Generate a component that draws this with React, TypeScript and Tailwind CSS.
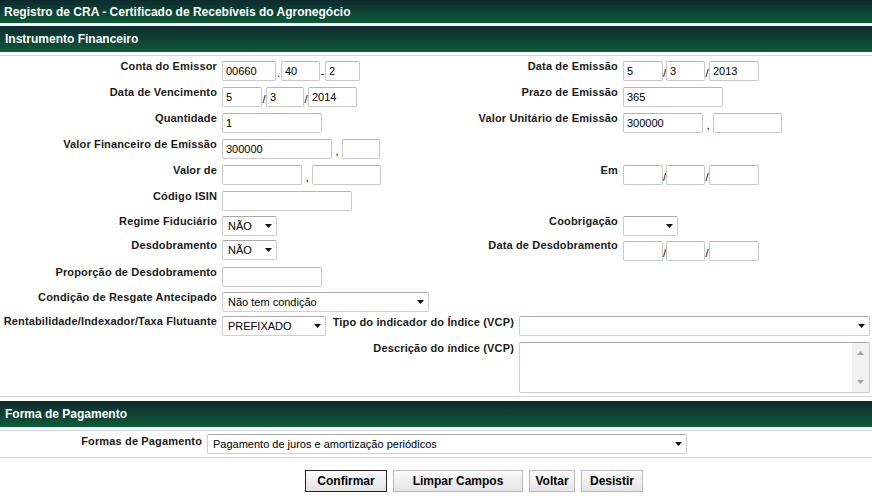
import React from "react";

// Registro de CRA – formulário de instrumento financeiro

function Field({ className = "", value = "" }: { className?: string; value?: string }) {
  return (
    <div
      className={`flex h-[20px] items-center rounded-[2px] border border-[#c9c9c9] border-t-[#b5b5b5] bg-white pl-[3px] text-[11px] text-black ${className}`}
    >
      {value}
    </div>
  );
}

function Sep({ ch, className = "w-[4px]" }: { ch: string; className?: string }) {
  return (
    <span className={`flex h-[20px] items-end justify-center pb-[2px] text-[11px] leading-[11px] text-black ${className}`}>
      {ch}
    </span>
  );
}

function Caret() {
  return (
    <svg width="7" height="4" viewBox="0 0 7 4" className="shrink-0">
      <path d="M0 0h7L3.5 4z" fill="#111" />
    </svg>
  );
}

function Select({ className = "", value = "" }: { className?: string; value?: string }) {
  return (
    <div
      className={`flex h-[20px] items-center justify-between rounded-[2px] border border-[#cfcfcf] border-t-[#a9a9a9] bg-white pl-[5px] pr-[4px] text-[11px] text-black ${className}`}
    >
      <span className="pt-[1px]">{value}</span>
      <Caret />
    </div>
  );
}

function Label({ children, className = "w-[217px]" }: { children: React.ReactNode; className?: string }) {
  return (
    <div className={`shrink-0 text-right text-[11px] font-bold leading-[11px] tracking-[0.15px] text-[#1a1a1a] ${className}`}>
      {children}
    </div>
  );
}

function Left({ label, children }: { label: string; children?: React.ReactNode }) {
  return (
    <div className="flex w-[420px] shrink-0 items-start gap-[5px]">
      <Label>{label}</Label>
      <div className="flex items-start">{children}</div>
    </div>
  );
}

function Right({ label, children }: { label?: string; children?: React.ReactNode }) {
  if (!label) return null;
  return (
    <div className="flex items-start gap-[5px]">
      <Label className="w-[198px]">{label}</Label>
      <div className="flex items-start">{children}</div>
    </div>
  );
}

function DateTriple() {
  return (
    <>
      <Field className="w-[40px]" />
      <Sep ch="/" className="w-[3px]" />
      <Field className="w-[39px]" />
      <Sep ch="/" />
      <Field className="w-[50px]" />
    </>
  );
}

function Header({ children, className = "" }: { children: React.ReactNode; className?: string }) {
  return (
    <div
      className={`flex items-center bg-gradient-to-b from-[#0d2a2e] to-[#0c5b37] text-[12px] font-bold text-white ${className}`}
    >
      {children}
    </div>
  );
}

function Button({ children, className = "", primary = false }: { children: React.ReactNode; className?: string; primary?: boolean }) {
  return (
    <div
      className={`flex h-[22px] items-center justify-center border bg-gradient-to-b from-[#fbfbfb] to-[#e4e4e4] text-[12px] font-bold text-black ${
        primary ? "border-[#222]" : "border-[#b9b9b9]"
      } ${className}`}
    >
      {children}
    </div>
  );
}

export default function App() {
  return (
    <div className="h-[499px] w-[872px] overflow-hidden bg-white font-['Liberation_Sans',Arial,sans-serif]">
      <Header className="h-[23px] pl-[4px]">Registro de CRA - Certificado de Recebíveis do Agronegócio</Header>
      <div className="h-[3px]" />
      <Header className="h-[26px] pl-[5px]">Instrumento Financeiro</Header>
      <div className="h-[3px]" />
      <div className="h-px bg-[#d6d6d6]" />

      <div className="pt-[5px]">
        <div className="flex h-[26px]">
          <Left label="Conta do Emissor">
            <Field className="w-[54px]" value="00660" />
            <Sep ch="." className="w-[5px]" />
            <Field className="w-[39px]" value="40" />
            <Sep ch="-" className="w-[5px]" />
            <Field className="w-[35px]" value="2" />
          </Left>
          <Right label="Data de Emissão">
            <Field className="w-[40px]" value="5" />
            <Sep ch="/" className="w-[3px]" />
            <Field className="w-[39px]" value="3" />
            <Sep ch="/" />
            <Field className="w-[50px]" value="2013" />
          </Right>
        </div>

        <div className="flex h-[26px]">
          <Left label="Data de Vencimento">
            <Field className="w-[40px]" value="5" />
            <Sep ch="/" />
            <Field className="w-[38px]" value="3" />
            <Sep ch="/" />
            <Field className="w-[49px]" value="2014" />
          </Left>
          <Right label="Prazo de Emissão">
            <Field className="w-[100px]" value="365" />
          </Right>
        </div>

        <div className="flex h-[26px]">
          <Left label="Quantidade">
            <Field className="w-[100px]" value="1" />
          </Left>
          <Right label="Valor Unitário de Emissão">
            <Field className="w-[80px]" value="300000" />
            <Sep ch="," className="w-[10px]" />
            <Field className="w-[69px]" />
          </Right>
        </div>

        <div className="flex h-[26px]">
          <Left label="Valor Financeiro de Emissão">
            <Field className="w-[110px]" value="300000" />
            <Sep ch="," className="w-[10px]" />
            <Field className="w-[38px]" />
          </Left>
        </div>

        <div className="flex h-[26px]">
          <Left label="Valor de">
            <Field className="w-[80px]" />
            <Sep ch="," className="w-[10px]" />
            <Field className="w-[69px]" />
          </Left>
          <Right label="Em">
            <DateTriple />
          </Right>
        </div>

        <div className="flex h-[25px]">
          <Left label="Código ISIN">
            <Field className="w-[130px]" />
          </Left>
        </div>

        <div className="flex h-[24px]">
          <Left label="Regime Fiduciário">
            <Select className="w-[55px]" value="NÃO" />
          </Left>
          <Right label="Coobrigação">
            <Select className="w-[55px]" />
          </Right>
        </div>

        <div className="flex h-[27px]">
          <Left label="Desdobramento">
            <Select className="w-[55px]" value="NÃO" />
          </Left>
          <Right label="Data de Desdobramento">
            <div className="flex pt-[1px]">
              <DateTriple />
            </div>
          </Right>
        </div>

        <div className="flex h-[25px]">
          <Left label="Proporção de Desdobramento">
            <Field className="w-[100px]" />
          </Left>
        </div>

        <div className="flex h-[24px]">
          <Left label="Condição de Resgate Antecipado">
            <Select className="w-[207px]" value="Não tem condição" />
          </Left>
        </div>

        <div className="flex h-[26px] items-start pr-[2px]">
          <Label>Rentabilidade/Indexador/Taxa Flutuante</Label>
          <Select className="ml-[5px] w-[104px] shrink-0" value="PREFIXADO" />
          <Label className="flex-1 pt-[1px]">Tipo do indicador do Índice (VCP)</Label>
          <Select className="ml-[5px] w-[351px] shrink-0" />
        </div>

        <div className="flex items-start pr-[2px]">
          <Label className="flex-1 pt-[1px]">Descrição do índice (VCP)</Label>
          <div className="ml-[5px] flex h-[51px] w-[351px] shrink-0 rounded-[2px] border border-[#cfcfcf] border-t-[#a9a9a9] bg-white">
            <div className="flex-1" />
            <div className="flex w-[17px] flex-col items-center justify-between bg-[#f1f1f1] py-[8px]">
              <svg width="7" height="4" viewBox="0 0 7 4">
                <path d="M3.5 0L7 4H0z" fill="#a3a3a3" />
              </svg>
              <svg width="7" height="4" viewBox="0 0 7 4">
                <path d="M0 0h7L3.5 4z" fill="#a3a3a3" />
              </svg>
            </div>
          </div>
        </div>
      </div>

      <div className="h-[3px]" />
      <div className="h-px bg-[#d6d6d6]" />
      <div className="h-[4px]" />
      <Header className="h-[26px] pl-[5px]">Forma de Pagamento</Header>
      <div className="h-[3px]" />
      <div className="h-px bg-[#d6d6d6]" />
      <div className="flex items-start gap-[5px] pb-[3px] pt-[3px]">
        <Label className="w-[202px] pt-[2px]">Formas de Pagamento</Label>
        <Select className="w-[480px]" value="Pagamento de juros e amortização periódicos" />
      </div>
      <div className="h-px bg-[#d6d6d6]" />

      <div className="flex gap-[6px] pl-[305px] pt-[12px]">
        <Button primary className="w-[82px]">Confirmar</Button>
        <Button className="w-[130px]">Limpar Campos</Button>
        <Button className="w-[46px]">Voltar</Button>
        <Button className="w-[62px]">Desistir</Button>
      </div>
    </div>
  );
}
